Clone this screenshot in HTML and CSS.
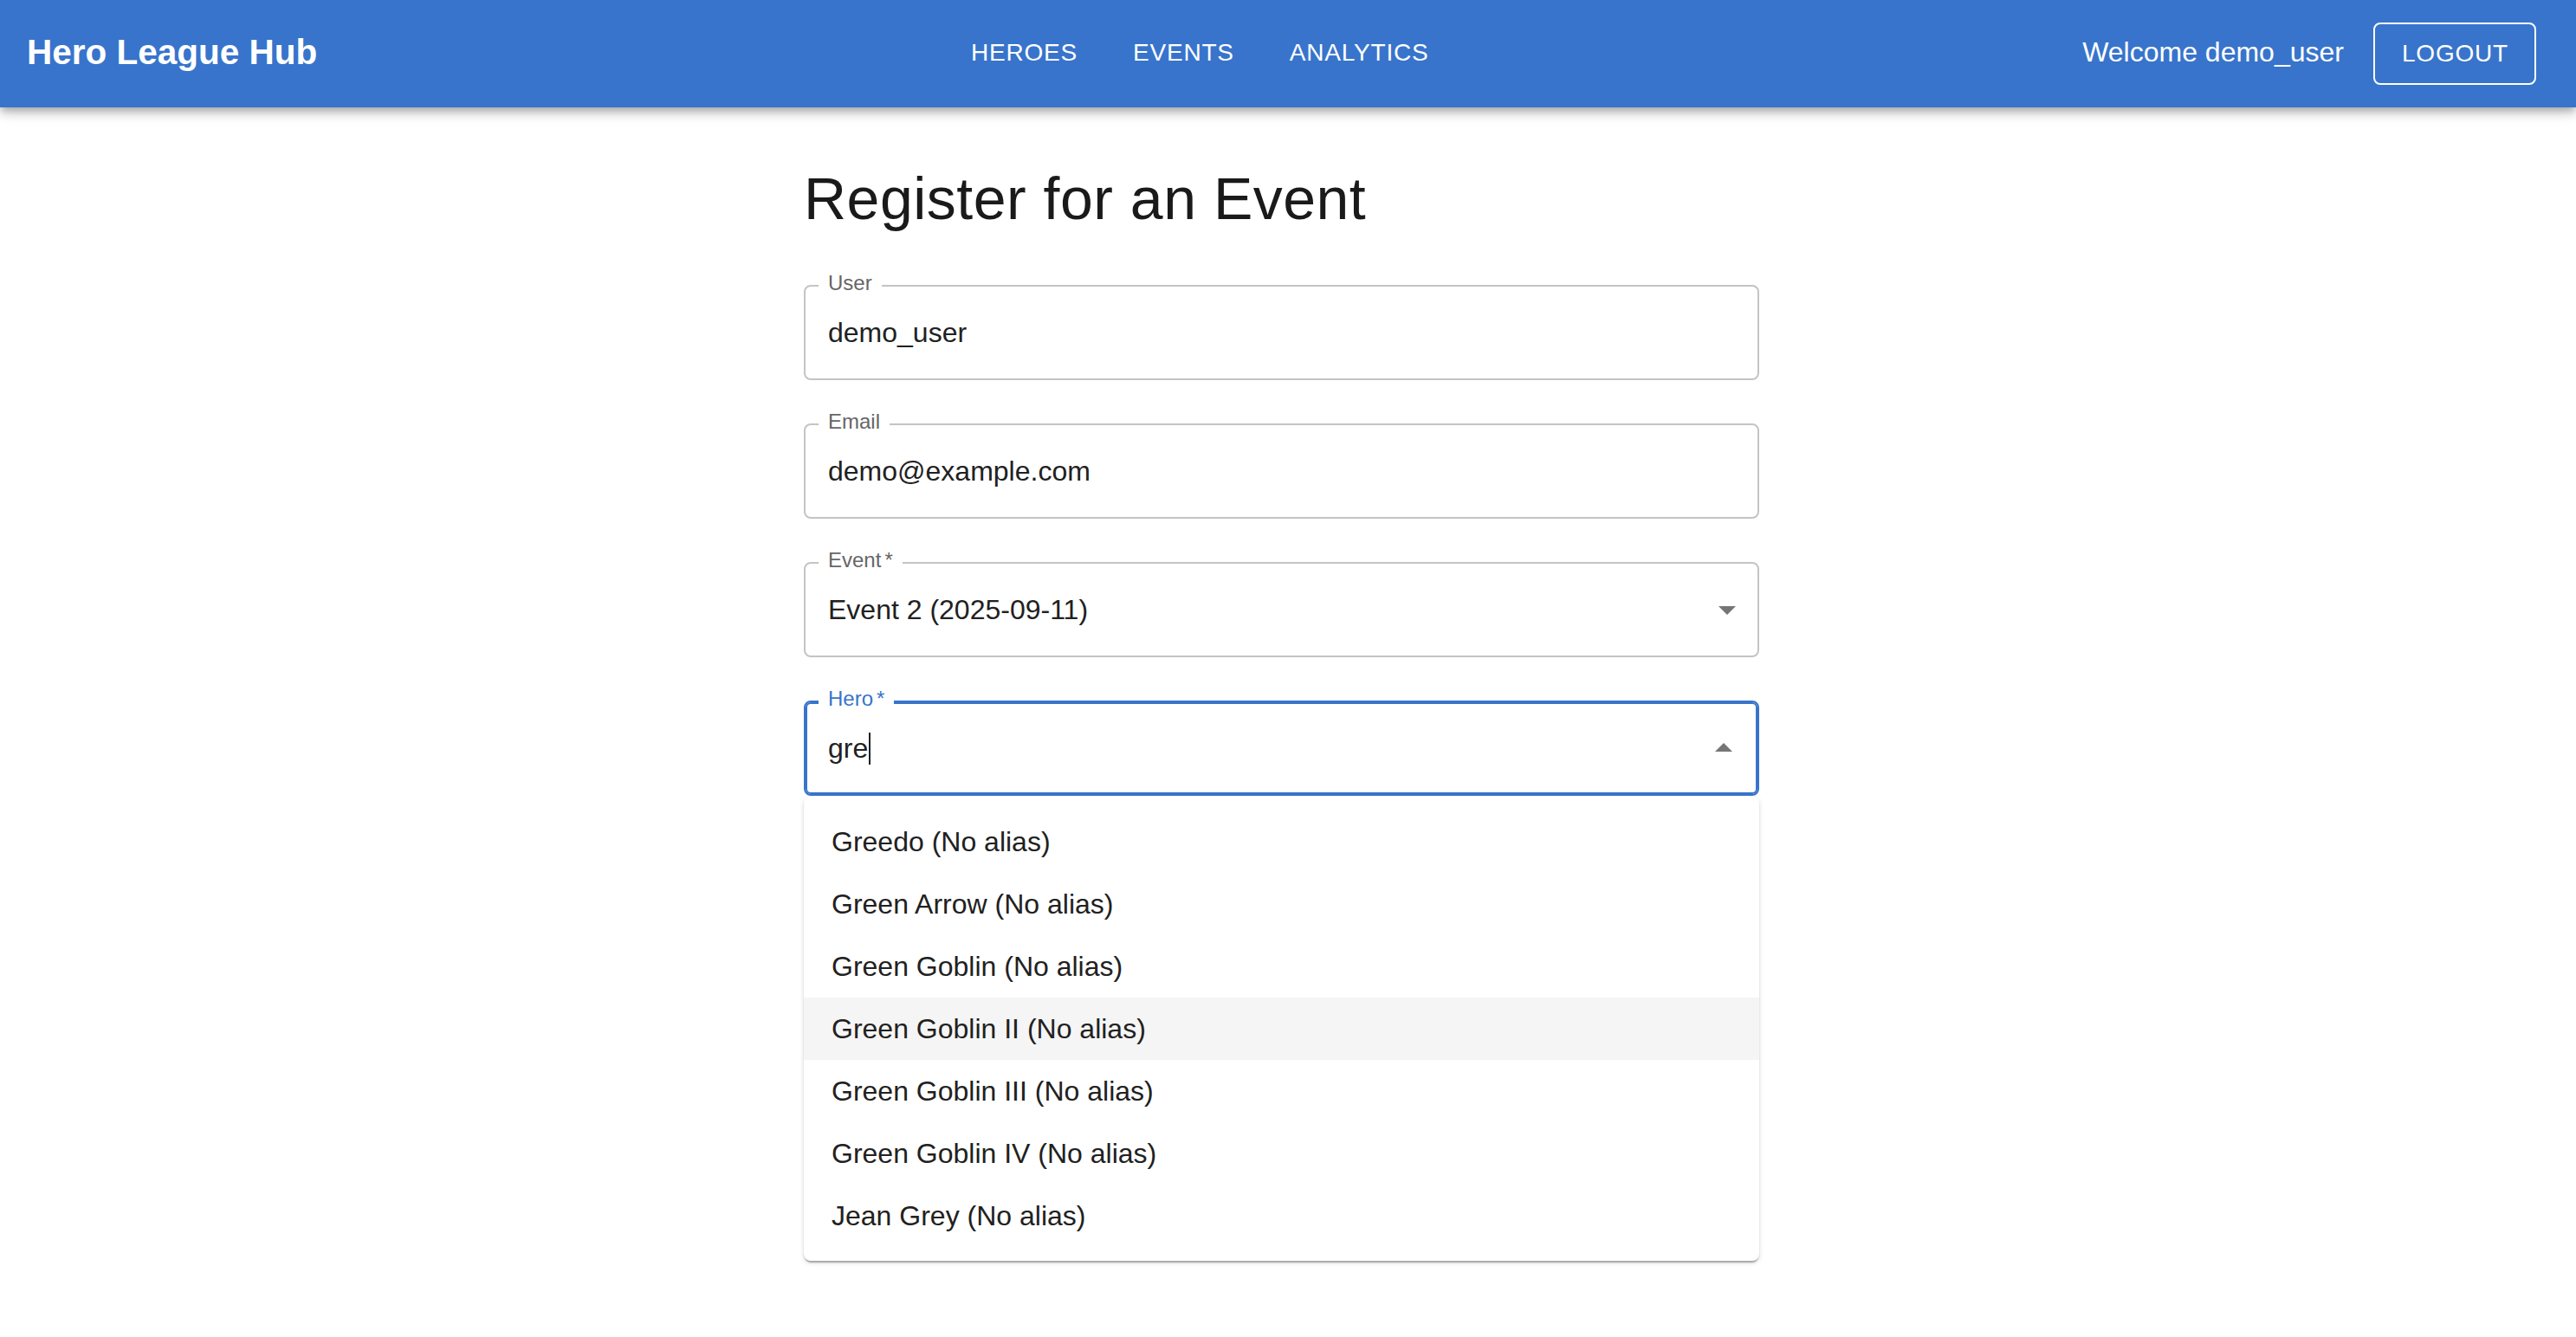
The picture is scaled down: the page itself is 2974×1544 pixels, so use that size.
FILE: index.html
```html
<!DOCTYPE html>
<html lang="en">
<head>
<meta charset="utf-8">
<title>Hero League Hub</title>
<link rel="stylesheet" href="styles.css">
</head>
<body>
<header class="appbar">
  <div class="brand">Hero League Hub</div>
  <nav class="nav">
    <span class="nav-item">Heroes</span>
    <span class="nav-item">Events</span>
    <span class="nav-item">Analytics</span>
  </nav>
  <div class="account">
    <span class="welcome">Welcome demo_user</span>
    <span class="logout">Logout</span>
  </div>
</header>

<main class="page">
  <div class="form">
    <h1 class="title">Register for an Event</h1>

    <div class="field">
      <span class="field-label">User</span>
      <span class="field-value">demo_user</span>
    </div>

    <div class="field">
      <span class="field-label">Email</span>
      <span class="field-value">demo@example.com</span>
    </div>

    <div class="field field-select">
      <span class="field-label">Event<span class="req">*</span></span>
      <span class="field-value">Event 2 (2025-09-11)</span>
      <svg class="arrow" viewBox="0 0 24 24" width="48" height="48"><path d="M7 10l5 5 5-5z"/></svg>
    </div>

    <div class="hero-wrap">
      <div class="field field-focused">
        <span class="field-label label-focused">Hero<span class="req">*</span></span>
        <span class="field-value">gre<span class="caret"></span></span>
        <svg class="arrow arrow-up" viewBox="0 0 24 24" width="48" height="48"><path d="M7 14l5-5 5 5z"/></svg>
      </div>
      <ul class="listbox">
        <li class="option">Greedo (No alias)</li>
        <li class="option">Green Arrow (No alias)</li>
        <li class="option">Green Goblin (No alias)</li>
        <li class="option option-active">Green Goblin II (No alias)</li>
        <li class="option">Green Goblin III (No alias)</li>
        <li class="option">Green Goblin IV (No alias)</li>
        <li class="option">Jean Grey (No alias)</li>
      </ul>
    </div>
  </div>
</main>
</body>
</html>
```

FILE: styles.css
```css
* {
  box-sizing: border-box;
}

html, body {
  margin: 0;
  padding: 0;
  background: #ffffff;
}

body {
  font-family: "Liberation Sans", Arial, Helvetica, sans-serif;
  color: #212121;
  min-height: 1544px;
}

/* ---------- App bar ---------- */
.appbar {
  height: 124px;
  background: #3874cb;
  color: #ffffff;
  display: flex;
  align-items: center;
  padding: 0 46px 0 31px;
  box-shadow: 0 4px 8px -2px rgba(0, 0, 0, 0.2), 0 8px 10px 0 rgba(0, 0, 0, 0.14), 0 2px 20px 0 rgba(0, 0, 0, 0.12);
}

.brand {
  font-size: 40.5px;
  font-weight: 700;
  line-height: 1.6;
  padding-bottom: 4px;
}

.nav {
  flex: 1;
  display: flex;
  justify-content: center;
  gap: 64px;
  padding-bottom: 4px;
}

.nav-item {
  font-size: 28px;
  font-weight: 500;
  letter-spacing: 0.8px;
  text-transform: uppercase;
  line-height: 1.75;
}

.account {
  display: flex;
  align-items: center;
}

.welcome {
  font-size: 32px;
  line-height: 1.5;
  margin-right: 34px;
  padding-bottom: 4px;
}

.logout {
  height: 72px;
  display: flex;
  align-items: center;
  padding: 0 30px 0 31px;
  border: 2px solid #ffffff;
  border-radius: 8px;
  font-size: 28px;
  font-weight: 500;
  letter-spacing: 0.8px;
  text-transform: uppercase;
}

/* ---------- Page ---------- */
.page {
  display: flex;
  justify-content: center;
  padding: 63px 15px 0 0;
}

.form {
  width: 1103px;
  display: flex;
  flex-direction: column;
  gap: 50px;
}

.title {
  margin: 0 0 8px 0;
  font-size: 68px;
  font-weight: 400;
  line-height: 84px;
  letter-spacing: 0.5px;
  color: #1a1a1a;
}

.field {
  position: relative;
  height: 110px;
  border: 2px solid #c4c4c4;
  border-radius: 8px;
  display: flex;
  align-items: center;
  padding: 0 11px 0 26px;
}

.field-label {
  position: absolute;
  top: -16px;
  left: 15px;
  padding: 0 11px;
  background: #ffffff;
  font-size: 24px;
  line-height: 24px;
  color: #666666;
}

.req {
  margin-left: 4px;
}

.field-value {
  font-size: 32px;
  line-height: 48px;
  color: #212121;
  display: flex;
  align-items: center;
}

.arrow {
  margin-left: auto;
  fill: #757575;
  flex: none;
}

/* focused Hero field */
.hero-wrap {
  position: relative;
}

.field-focused {
  border-color: #3874cb;
  box-shadow: inset 0 0 0 2px #3874cb;
  padding-right: 15px;
}

.label-focused {
  color: #3874cb;
}

.caret {
  display: inline-block;
  width: 2px;
  height: 37px;
  background: #212121;
  margin-left: 1px;
}

/* ---------- Autocomplete list ---------- */
.listbox {
  position: absolute;
  top: calc(100% + 1px);
  left: 0;
  right: 0;
  margin: 0;
  padding: 16px 0;
  list-style: none;
  background: #ffffff;
  border-radius: 8px;
  box-shadow: 0 4px 2px -2px rgba(0, 0, 0, 0.2), 0 2px 2px 0 rgba(0, 0, 0, 0.14), 0 2px 6px 0 rgba(0, 0, 0, 0.12);
}

.option {
  height: 72px;
  display: flex;
  align-items: center;
  padding: 0 32px;
  font-size: 32px;
  line-height: 48px;
  color: #212121;
}

.option-active {
  background: #f5f5f5;
}
```
